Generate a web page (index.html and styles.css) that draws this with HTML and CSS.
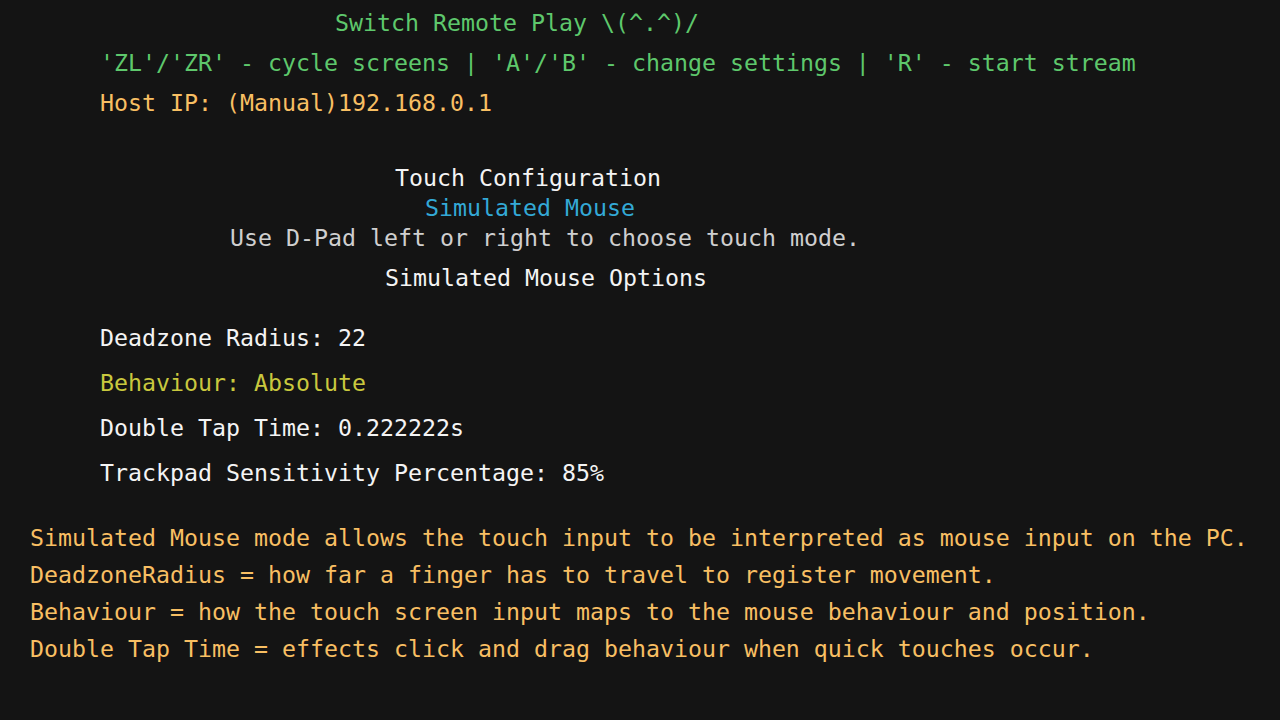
FILE: index.html
```html
<!DOCTYPE html>
<html>
<head>
<meta charset="utf-8">
<link rel="stylesheet" href="styles.css">
</head>
<body>
<div class="screen">
  <div class="header">
    <div class="line green title">Switch Remote Play \(^.^)/</div>
    <div class="line green indent">'ZL'/'ZR' - cycle screens | 'A'/'B' - change settings | 'R' - start stream</div>
    <div class="line orange indent">Host IP: (Manual)192.168.0.1</div>
  </div>
  <div class="touch">
    <div class="tline white t-config">Touch Configuration</div>
    <div class="tline blue t-mode">Simulated Mouse</div>
    <div class="tline gray t-hint">Use D-Pad left or right to choose touch mode.</div>
    <div class="tline white t-options">Simulated Mouse Options</div>
  </div>
  <div class="options">
    <div class="oline white">Deadzone Radius: 22</div>
    <div class="oline yellow">Behaviour: Absolute</div>
    <div class="oline white">Double Tap Time: 0.222222s</div>
    <div class="oline white">Trackpad Sensitivity Percentage: 85%</div>
  </div>
  <div class="desc">
    <div class="dline orange">Simulated Mouse mode allows the touch input to be interpreted as mouse input on the PC.</div>
    <div class="dline orange">DeadzoneRadius = how far a finger has to travel to register movement.</div>
    <div class="dline orange">Behaviour = how the touch screen input maps to the mouse behaviour and position.</div>
    <div class="dline orange">Double Tap Time = effects click and drag behaviour when quick touches occur.</div>
  </div>
</div>
</body>
</html>
```
FILE: styles.css
```css
html, body {
  margin: 0;
  padding: 0;
  background: #141414;
}
.screen {
  width: 1280px;
  height: 720px;
  background: #141414;
  font-family: "DejaVu Sans Mono", "Liberation Mono", monospace;
  font-size: 23.25px;
  overflow: hidden;
}
.line, .tline, .oline, .dline {
  white-space: pre;
}
.header {
  padding-top: 3px;
}
.line {
  height: 40px;
  line-height: 40px;
}
.title { padding-left: 335px; }
.indent { padding-left: 100px; }
.touch {
  margin-top: 40px;
}
.tline {
  height: 30px;
  line-height: 30px;
}
.t-config { padding-left: 395px; }
.t-mode { padding-left: 425px; }
.t-hint { padding-left: 230px; }
.t-options { padding-left: 385px; margin-top: 10px; }
.options {
  margin-top: 22px;
  padding-left: 100px;
}
.oline {
  height: 45px;
  line-height: 45px;
}
.desc {
  margin-top: 24px;
  padding-left: 30px;
}
.dline {
  height: 37px;
  line-height: 37px;
}
.green { color: #5ec86c; }
.orange { color: #f8bf63; }
.white { color: #f4f4f4; }
.blue { color: #33a9d6; }
.gray { color: #cfcfcf; }
.yellow { color: #c9c83e; }
```
